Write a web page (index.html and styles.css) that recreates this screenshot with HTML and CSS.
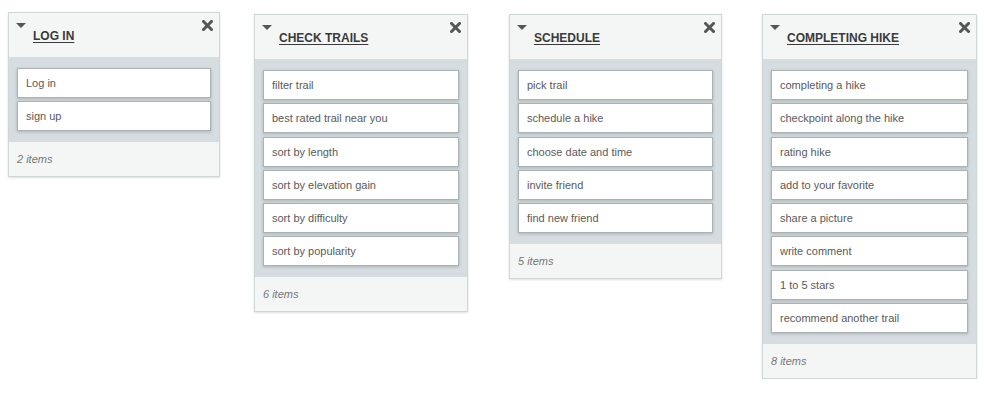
FILE: index.html
```html
<!DOCTYPE html>
<html lang="en">
<head>
<meta charset="utf-8">
<title>Hike board</title>
<link rel="stylesheet" href="styles.css">
</head>
<body>
<div class="board">
  <section class="card card-1">
    <header class="card-head">
      <span class="caret"></span>
      <a class="card-title" href="#">LOG IN</a>
      <svg class="close" width="11" height="11" viewBox="0 0 11 11"><path d="M1.5 1.5 L9.5 9.5 M9.5 1.5 L1.5 9.5" stroke="#555" stroke-width="3" stroke-linecap="square"/></svg>
    </header>
    <ul class="card-body">
      <li class="item">Log in</li>
      <li class="item">sign up</li>
    </ul>
    <footer class="card-foot">2 items</footer>
  </section>

  <section class="card card-2">
    <header class="card-head">
      <span class="caret"></span>
      <a class="card-title" href="#">CHECK TRAILS</a>
      <svg class="close" width="11" height="11" viewBox="0 0 11 11"><path d="M1.5 1.5 L9.5 9.5 M9.5 1.5 L1.5 9.5" stroke="#555" stroke-width="3" stroke-linecap="square"/></svg>
    </header>
    <ul class="card-body">
      <li class="item">filter trail</li>
      <li class="item">best rated trail near you</li>
      <li class="item">sort by length</li>
      <li class="item">sort by elevation gain</li>
      <li class="item">sort by difficulty</li>
      <li class="item">sort by popularity</li>
    </ul>
    <footer class="card-foot">6 items</footer>
  </section>

  <section class="card card-3">
    <header class="card-head">
      <span class="caret"></span>
      <a class="card-title" href="#">SCHEDULE</a>
      <svg class="close" width="11" height="11" viewBox="0 0 11 11"><path d="M1.5 1.5 L9.5 9.5 M9.5 1.5 L1.5 9.5" stroke="#555" stroke-width="3" stroke-linecap="square"/></svg>
    </header>
    <ul class="card-body">
      <li class="item">pick trail</li>
      <li class="item">schedule a hike</li>
      <li class="item">choose date and time</li>
      <li class="item">invite friend</li>
      <li class="item">find new friend</li>
    </ul>
    <footer class="card-foot">5 items</footer>
  </section>

  <section class="card card-4">
    <header class="card-head">
      <span class="caret"></span>
      <a class="card-title" href="#">COMPLETING HIKE</a>
      <svg class="close" width="11" height="11" viewBox="0 0 11 11"><path d="M1.5 1.5 L9.5 9.5 M9.5 1.5 L1.5 9.5" stroke="#555" stroke-width="3" stroke-linecap="square"/></svg>
    </header>
    <ul class="card-body">
      <li class="item">completing a hike</li>
      <li class="item">checkpoint along the hike</li>
      <li class="item">rating hike</li>
      <li class="item">add to your favorite</li>
      <li class="item">share a picture</li>
      <li class="item">write comment</li>
      <li class="item">1 to 5 stars</li>
      <li class="item">recommend another trail</li>
    </ul>
    <footer class="card-foot">8 items</footer>
  </section>
</div>
</body>
</html>
```

FILE: styles.css
```css
html, body {
  margin: 0;
  padding: 0;
  background: #ffffff;
}

body {
  font-family: "Liberation Sans", Arial, sans-serif;
  color: #555;
}

.board {
  display: flex;
  align-items: flex-start;
  padding: 12px 0 0 8px;
}

.card {
  box-sizing: border-box;
  border: 1px solid #cfd6d8;
  background: #f4f6f6;
  box-shadow: 0 1px 2px rgba(0, 0, 0, 0.12);
  display: flex;
  flex-direction: column;
}

.card-1 { width: 212px; }
.card-2 { width: 214px; margin-left: 34px; margin-top: 2px; }
.card-3 { width: 213px; margin-left: 41px; margin-top: 2px; }
.card-4 { width: 215px; margin-left: 40px; margin-top: 2px; }

.card-head {
  position: relative;
  height: 44px;
  background: #f4f6f6;
  padding-left: 24px;
  box-sizing: border-box;
}

.caret {
  position: absolute;
  left: 7px;
  top: 10px;
  width: 0;
  height: 0;
  border-left: 5px solid transparent;
  border-right: 5px solid transparent;
  border-top: 5px solid #555;
}

.card-title {
  display: inline-block;
  margin-top: 16px;
  font-size: 12px;
  line-height: 14px;
  font-weight: bold;
  color: #3a3a3a;
  text-decoration: underline;
  text-underline-offset: 2px;
}

.close {
  position: absolute;
  right: 6px;
  top: 7px;
  display: block;
}

.card-body {
  list-style: none;
  margin: 0;
  padding: 11px 8px;
  background: #d5dde0;
  display: flex;
  flex-direction: column;
  gap: 3.3px;
}

.item {
  box-sizing: border-box;
  height: 30px;
  background: #ffffff;
  border: 1px solid #aab2b5;
  box-shadow: 0 1px 3px rgba(0, 0, 0, 0.2);
  padding: 0 8px;
  display: flex;
  align-items: center;
  font-size: 11px;
  color: #5a5a5a;
}

.card-foot {
  height: 34px;
  box-sizing: border-box;
  padding: 0 8px;
  display: flex;
  align-items: center;
  font-size: 11px;
  font-style: italic;
  color: #777;
  background: #f4f6f6;
}
```
